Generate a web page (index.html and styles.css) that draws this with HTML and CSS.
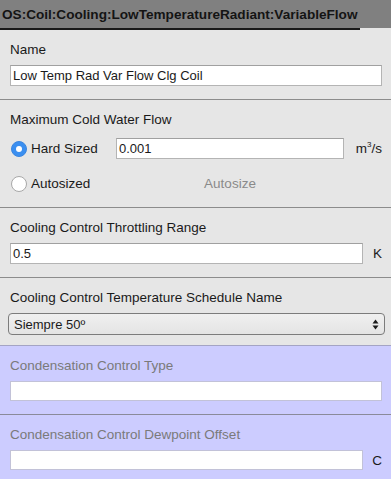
FILE: index.html
```html
<!DOCTYPE html>
<html lang="en">
<head>
  <meta charset="UTF-8">
  <meta name="viewport" content="width=device-width, initial-scale=1.0">
  <title>OS:Coil:Cooling:LowTemperatureRadiant:VariableFlow</title>
  <link rel="stylesheet" href="styles.css">
</head>
<body>
  <div class="header">
    <div class="title">OS:Coil:Cooling:LowTemperatureRadiant:VariableFlow</div>
  </div>
  <div class="header-line"></div>

  <div class="section">
    <div class="label">Name</div>
    <div class="field-row">
      <div class="field">Low Temp Rad Var Flow Clg Coil</div>
    </div>
  </div>

  <div class="section">
    <div class="label">Maximum Cold Water Flow</div>
    <div class="radio-row">
      <span class="radio checked"></span>
      <span class="radio-label">Hard Sized</span>
      <div class="field">0.001</div>
      <span class="unit unit-wide">m<sup>3</sup>/s</span>
    </div>
    <div class="radio-row">
      <span class="radio"></span>
      <span class="radio-label">Autosized</span>
      <div class="autosize">Autosize</div>
      <span class="unit unit-wide"></span>
    </div>
  </div>

  <div class="section">
    <div class="label">Cooling Control Throttling Range</div>
    <div class="field-row">
      <div class="field">0.5</div>
      <span class="unit">K</span>
    </div>
  </div>

  <div class="section section-select">
    <div class="label">Cooling Control Temperature Schedule Name</div>
    <div class="select">
      <span>Siempre 50º</span>
      <svg class="arrows" width="7" height="11" viewBox="0 0 7 11">
        <path d="M3.5 0.5 L6.5 4.5 L0.5 4.5 Z" fill="#1a1a1a"/>
        <path d="M3.5 10.5 L6.5 6.5 L0.5 6.5 Z" fill="#1a1a1a"/>
      </svg>
    </div>
  </div>

  <div class="disabled">
    <div class="section">
      <div class="label">Condensation Control Type</div>
      <div class="field-row">
        <div class="field"></div>
      </div>
    </div>
    <div class="section last">
      <div class="label">Condensation Control Dewpoint Offset</div>
      <div class="field-row">
        <div class="field"></div>
        <span class="unit">C</span>
      </div>
    </div>
  </div>
</body>
</html>
```

FILE: styles.css
```css
body {
  margin: 0;
  font-family: "Liberation Sans", Arial, sans-serif;
  font-size: 13.5px;
  color: #1a1a1a;
  background-color: #e6e6e6;
}
.header {
  height: 28px;
  background-color: #808080;
  display: flex;
  align-items: center;
  padding-left: 2px;
}
.title {
  font-weight: bold;
  font-size: 13.6px;
  color: #141414;
  white-space: nowrap;
}
.header-line {
  width: 360px;
  height: 2px;
  background-color: #1a1a1a;
}
.section {
  padding: 12px 9px 13px 10px;
  border-bottom: 1px solid #8c8c8c;
  display: flex;
  flex-direction: column;
}
.label {
  height: 16px;
  line-height: 16px;
  margin-bottom: 7px;
}
.field-row {
  display: flex;
  align-items: center;
}
.field {
  flex: 1;
  height: 21px;
  box-sizing: border-box;
  background-color: white;
  border: 1px solid #b4b4b4;
  border-top-color: #a0a0a0;
  padding: 0 2px;
  line-height: 19px;
  font-size: 13px;
  white-space: nowrap;
}
.unit {
  width: 19px;
  text-align: right;
}
.unit-wide {
  width: 38px;
}
.unit sup {
  font-size: 8px;
  vertical-align: 6px;
  line-height: 0;
}
.radio-row {
  display: flex;
  align-items: center;
  height: 21px;
  margin-top: 3px;
}
.radio-row + .radio-row {
  margin-top: 14px;
}
.radio {
  width: 16px;
  height: 16px;
  box-sizing: border-box;
  border-radius: 50%;
  background-color: white;
  border: 1px solid #a8a8a8;
  margin-left: 1px;
  display: flex;
  align-items: center;
  justify-content: center;
}
.radio.checked {
  background-color: #3b8ff0;
  border-color: #3b86e0;
}
.radio.checked::after {
  content: "";
  width: 6px;
  height: 6px;
  border-radius: 50%;
  background-color: white;
}
.radio-label {
  width: 85px;
  padding-left: 4px;
}
.autosize {
  flex: 1;
  text-align: center;
  color: #8a8a8a;
}
.section-select {
  padding-bottom: 10px;
  border-bottom-color: #a4a4c4;
}
.select {
  height: 22px;
  margin: 0 -3px 0 -2px;
  box-sizing: border-box;
  border: 1px solid #7c7c7c;
  border-radius: 4px;
  background: linear-gradient(#f0f0f0, #e4e4e4);
  display: flex;
  align-items: center;
  justify-content: space-between;
  padding: 0 5px 0 5px;
  font-size: 13px;
}
.arrows {
  display: block;
}
.disabled {
  background-color: #ccccff;
}
.disabled .label {
  color: #7a7a7a;
}
.disabled .field {
  border-color: #c2c2d8;
  height: 20px;
}
.disabled .section {
  border-bottom-color: #8a8a9a;
}
.disabled .section.last {
  border-bottom: none;
}
```
